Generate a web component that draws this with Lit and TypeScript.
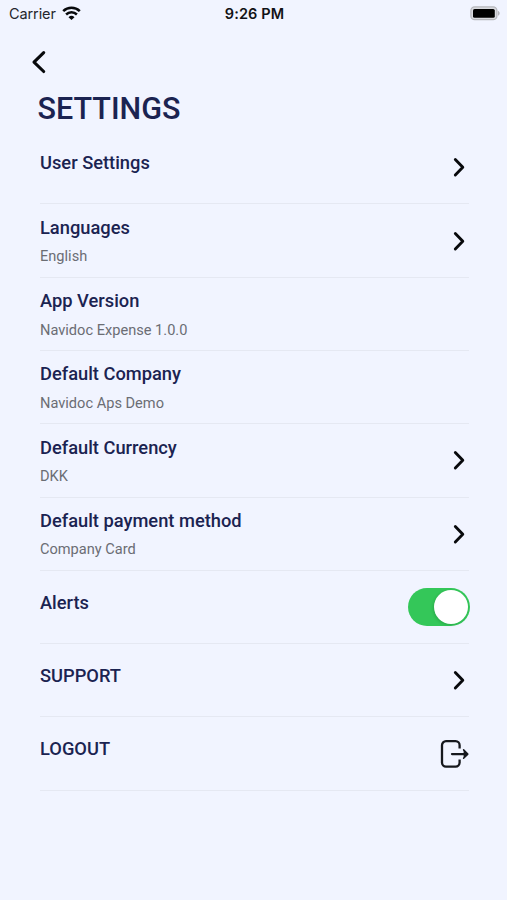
import { LitElement, html, css, svg, nothing } from "lit";
import { customElement, property } from "lit/decorators.js";

type Trailing = "chevron" | "switch" | "logout" | "none";

interface Setting {
  label: string;
  value?: string;
  trailing: Trailing;
}

const SETTINGS: Setting[] = [
  { label: "User Settings", trailing: "chevron" },
  { label: "Languages", value: "English", trailing: "chevron" },
  { label: "App Version", value: "Navidoc Expense 1.0.0", trailing: "none" },
  { label: "Default Company", value: "Navidoc Aps Demo", trailing: "none" },
  { label: "Default Currency", value: "DKK", trailing: "chevron" },
  { label: "Default payment method", value: "Company Card", trailing: "chevron" },
  { label: "Alerts", trailing: "switch" },
  { label: "SUPPORT", trailing: "chevron" },
  { label: "LOGOUT", trailing: "logout" },
];

@customElement("status-bar")
export class StatusBar extends LitElement {
  static styles = css`
    :host {
      display: grid;
      grid-template-columns: 1fr auto 1fr;
      align-items: center;
      height: 27px;
      padding: 0 7px 0 9px;
      box-sizing: border-box;
      font-family: Inter, "Liberation Sans", sans-serif;
      color: #111216;
    }
    .carrier {
      display: flex;
      align-items: center;
      gap: 6px;
      font-size: 14.5px;
      letter-spacing: -0.1px;
      color: #24262c;
    }
    .time {
      font-size: 14.5px;
      font-weight: 600;
      letter-spacing: 0.1px;
    }
    .battery {
      justify-self: end;
      display: block;
    }
    .wifi {
      display: block;
    }
  `;

  render() {
    return html`
      <div class="carrier">
        <span>Carrier</span>
        <svg class="wifi" width="19" height="15" viewBox="0 0 19 15">
          <g fill="none" stroke="#08090b" stroke-width="2.5">
            <path d="M1.2 5.2a11.8 11.8 0 0 1 16.6 0" />
            <path d="M4.1 8.500a7.700 7.700 0 0 1 10.800 0" />
          </g>
          <path d="M9.5 14 6.5 11.2a4.3 4.3 0 0 1 6 0z" fill="#08090b" />
        </svg>
      </div>
      <div class="time">9:26 PM</div>
      <svg class="battery" width="30" height="15" viewBox="0 0 30 15">
        <rect x=".9" y=".9" width="26" height="12.8" rx="3.8" fill="#d9dadf" stroke="#b6b7bc" stroke-width="1.3" />
        <rect x="3" y="3" width="21.8" height="8.8" rx="1.6" fill="#000" />
        <path d="M28.2 5c1.800.7 1.800 4 0 4.700z" fill="#a5a6ab" />
      </svg>
    `;
  }
}

@customElement("setting-row")
export class SettingRow extends LitElement {
  @property() label = "";
  @property() value?: string;
  @property() trailing: Trailing = "none";

  static styles = css`
    :host {
      display: flex;
      justify-content: space-between;
      align-items: center;
      height: 73.3px;
      box-sizing: border-box;
      border-bottom: 1px solid #e5e8f2;
    }
    .text {
      align-self: flex-start;
      padding-top: 21px;
    }
    .text.double {
      padding-top: 12.4px;
    }
    .label {
      font-size: 18.3px;
      line-height: 21px;
      font-weight: 500;
      color: #1b2351;
      white-space: nowrap;
    }
    .value {
      margin-top: 9.5px;
      font-size: 14.6px;
      line-height: 18px;
      color: #6b6d74;
      white-space: nowrap;
    }
    svg {
      display: block;
    }
    .chevron {
      margin-right: 3px;
    }
    .switch {
      width: 62px;
      height: 38px;
      box-sizing: border-box;
      padding: 2px;
      border-radius: 19px;
      background: #34c759;
      display: flex;
      justify-content: flex-end;
      margin-right: -1px;
    }
    .knob {
      width: 34px;
      height: 34px;
      border-radius: 50%;
      background: #fff;
      box-shadow: -1px 1px 3px rgba(0, 60, 20, 0.2);
    }
  `;

  private renderTrailing() {
    switch (this.trailing) {
      case "chevron":
        return html`<svg class="chevron" width="14" height="20" viewBox="0 0 14 20">
          ${svg`<path d="M3.300 2.500 10.800 10.200 3.300 17.900" fill="none" stroke="#08090c" stroke-width="2.900" stroke-linecap="round" stroke-linejoin="round"/>`}
        </svg>`;
      case "switch":
        return html`<div class="switch"><div class="knob"></div></div>`;
      case "logout":
        return html`<svg width="30" height="30" viewBox="0 0 30 30">
          <g fill="none" stroke="#16181d" stroke-width="2.3" stroke-linecap="butt">
            <path d="M20.600 9.600V6.200a4 4 0 0 0-4-4H7a4 4 0 0 0-4 4V23.600a4 4 0 0 0 4 4h9.600a4 4 0 0 0 4-4V20.600" />
            <path d="M13 15.100H27" stroke-linecap="round" />
          </g>
          <path d="M24.600 10.900 28.800 15.100 24.600 19.300" fill="#16181d" stroke="#16181d" stroke-width="1.500" stroke-linejoin="round" stroke-linecap="round" />
        </svg>`;
      default:
        return nothing;
    }
  }

  render() {
    return html`
      <div class="text ${this.value ? "double" : ""}">
        <div class="label">${this.label}</div>
        ${this.value ? html`<div class="value">${this.value}</div>` : nothing}
      </div>
      ${this.renderTrailing()}
    `;
  }
}

@customElement("app-root")
export class AppRoot extends LitElement {
  static styles = css`
    :host {
      display: block;
      height: 900px;
      overflow: hidden;
      background: #f1f4ff;
      font-family: Roboto, "Liberation Sans", sans-serif;
    }
    .back {
      display: block;
      margin: 23px 0 0 30px;
    }
    .title {
      margin: 17px 0 0 37.5px;
      height: 40.1px;
      font-size: 30.500px;
      line-height: 36px;
      font-weight: 500;
      color: #1b2351;
    }
    .list {
      margin: 0 38px 0 40px;
    }
  `;

  render() {
    return html`
      <status-bar></status-bar>
      <svg class="back" width="18" height="24" viewBox="0 0 18 24">
        <path d="M13.700 2.700 4 12.200 13.700 21.500" fill="none" stroke="#08090c" stroke-width="3.100" stroke-linecap="round" stroke-linejoin="round" />
      </svg>
      <div class="title">SETTINGS</div>
      <div class="list">
        ${SETTINGS.map(
          (s) => html`<setting-row .label=${s.label} .value=${s.value} .trailing=${s.trailing}></setting-row>`
        )}
      </div>
    `;
  }
}
